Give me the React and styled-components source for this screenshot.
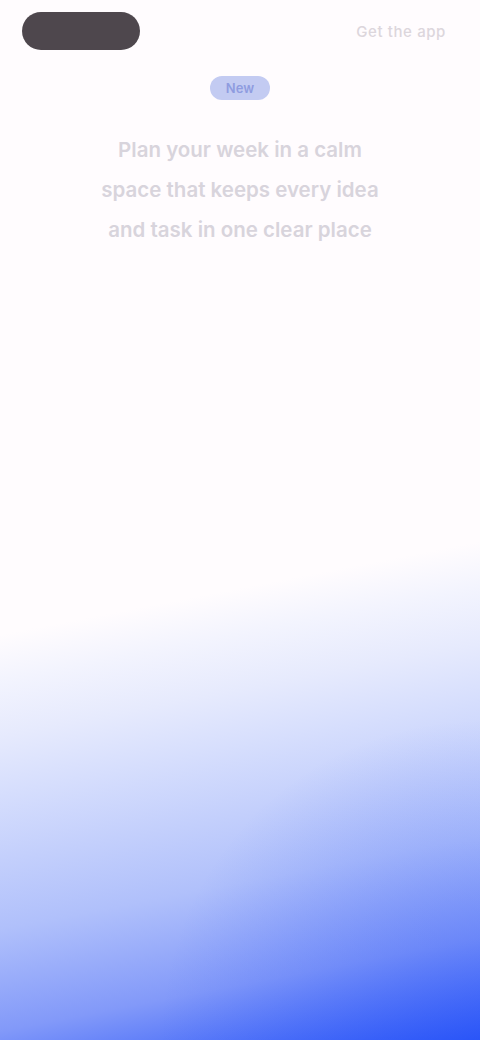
import React from "react";
import styled, { createGlobalStyle } from "styled-components";

const GlobalStyle = createGlobalStyle`
    html, body {
        margin: 0;
        padding: 0;
    }
    body {
        font-family: Inter, "Noto Sans", sans-serif;
        background: #fffcfe;
    }
`;

const App = () => {
    return (
        <>
            <GlobalStyle />
            <Page>
                <Header>
                    <Logo>Lumen</Logo>
                    <NavLink>Get the app</NavLink>
                </Header>
                <Hero>
                    <Badge>New</Badge>
                    <Headline>
                        Plan your week in a calm
                        <br />
                        space that keeps every idea
                        <br />
                        and task in one clear place
                    </Headline>
                </Hero>
            </Page>
        </>
    );
};

const Page = styled.div`
    min-height: 1040px;
    display: flex;
    flex-direction: column;
    background-color: #fffcfe;
    background-image:
        radial-gradient(
            circle 320px at 100% 100%,
            rgba(42, 85, 248, 0.38) 0%,
            rgba(42, 85, 248, 0) 100%
        ),
        linear-gradient(
            169deg,
            #fffcfe 0%,
            #fffcfe 56%,
            #f3f4fe 60%,
            #e6eafd 65%,
            #d6defd 70%,
            #b0c0fb 82%,
            #8299f9 91%,
            #2a55f8 100%
        );
`;

const Header = styled.header`
    display: flex;
    justify-content: space-between;
    align-items: center;
    padding: 12px 34px 0 22px;
`;

const Logo = styled.div`
    width: 118px;
    height: 38px;
    border-radius: 19px;
    background: #4e474d;
    color: #4e474d;
    font-size: 15px;
    font-weight: 700;
    display: flex;
    align-items: center;
    justify-content: center;
`;

const NavLink = styled.a`
    font-size: 15px;
    color: #dcd6dc;
    font-weight: 500;
    letter-spacing: 0.6px;
`;

const Hero = styled.section`
    display: flex;
    flex-direction: column;
    align-items: center;
    padding-top: 26px;
`;

const Badge = styled.span`
    padding: 4px 16px;
    border-radius: 12px;
    background: #c3cbf2;
    color: #8f9ce0;
    font-size: 13px;
    font-weight: 600;
`;

const Headline = styled.h1`
    margin: 30px 0 0;
    text-align: center;
    font-size: 20.5px;
    line-height: 40px;
    font-weight: 600;
    color: #d8d4dc;
`;

export default App;
